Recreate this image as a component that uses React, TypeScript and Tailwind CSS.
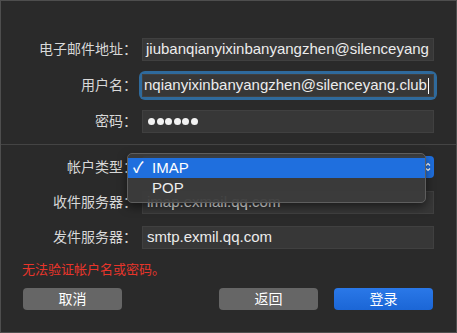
const labelCls = "w-[136px] shrink-0 text-right text-[14px] text-[#d8d8d8]";
const fieldCls = "w-[292px] h-[23px] bg-[#373737] border border-[#404040] flex items-center overflow-hidden whitespace-nowrap text-[15px] text-[#ececec]";

const Row = ({ label, children, className = "" }: { label: string; children: React.ReactNode; className?: string }) => (
  <div className={`flex items-center ${className}`}>
    <div className={labelCls}>{label}</div>
    <div className="ml-[5px]">{children}</div>
  </div>
);

export default function App() {
  return (
    <div
      className="w-[457px] h-[333px] bg-[#2a2a2a] border border-[#4e4e4e] overflow-hidden relative"
      style={{ fontFamily: '"Liberation Sans", "Noto Sans CJK SC", sans-serif' }}
    >
      <div className="pt-[37px]">
        <Row label="电子邮件地址：">
          <div className={`${fieldCls} px-[3px]`}>jiubanqianyixinbanyangzhen@silenceyang</div>
        </Row>

        <Row label="用户名：" className="mt-[13px]">
          <div className="rounded-[3px] ring-[3px] ring-[#2f6a9c]">
            <div className={`${fieldCls} h-[21px] pl-[1px]`}>
              <span>nqianyixinbanyangzhen@silenceyang.club</span>
              <span className="w-px h-[16px] bg-white ml-px shrink-0" />
            </div>
          </div>
        </Row>

        <Row label="密码：" className="mt-[13px]">
          <div className={`${fieldCls} px-[5px] gap-[1.5px]`}>
            {[0, 1, 2, 3, 4, 5].map((i) => (
              <span key={i} className="w-[7px] h-[7px] rounded-full bg-[#f2f2f2]" />
            ))}
          </div>
        </Row>

        <div className="mt-[11px] h-px bg-[#444444]" />

        <div className="relative mt-[11px]">
          <Row label="帐户类型：">
            <div className="w-[292px] h-[22px] rounded-[4px] bg-[#1f6fde] flex items-center justify-between pl-[8px] pr-[3px] text-[14px] text-white">
              <span>IMAP</span>
              <svg width="6" height="12" viewBox="0 0 6 12" fill="none" stroke="white" strokeWidth="1.2">
                <path d="M1 4.5 L3 2.5 L5 4.5" />
                <path d="M1 7.5 L3 9.5 L5 7.5" />
              </svg>
            </div>
          </Row>

          {/* popup menu */}
          <div className="absolute left-[126px] top-[-3px] w-[299px] h-[50px] rounded-[5px] border border-[#5e5e5e] bg-[#3b3b3b]/95 shadow-[0_4px_10px_rgba(0,0,0,0.5)] pt-[4px] z-10 text-[15px] text-white font-medium">
            <div className="h-[20px] bg-[#1f6fde] flex items-center">
              <span className="w-[24px] pl-[5px] text-[15px]">✓</span>
              <span>IMAP</span>
            </div>
            <div className="h-[20px] flex items-center">
              <span className="w-[24px]" />
              <span className="text-[#eeeeee]">POP</span>
            </div>
          </div>
        </div>

        <Row label="收件服务器：" className="mt-[13px]">
          <div className={`${fieldCls} px-[4px]`}>imap.exmail.qq.com</div>
        </Row>

        <Row label="发件服务器：" className="mt-[12px]">
          <div className={`${fieldCls} px-[4px]`}>smtp.exmil.qq.com</div>
        </Row>

        <div className="mt-[12px] pl-[21px] text-[13px] leading-[18px] text-[#e8352a]">无法验证帐户名或密码。</div>

        <div className="mt-[9px] flex pl-[22px] pr-[23px] text-[14px] text-white">
          <button className="w-[99px] h-[22px] rounded-[4px] bg-[#666666] flex items-center justify-center">取消</button>
          <div className="flex-1" />
          <button className="w-[99px] h-[22px] rounded-[4px] bg-[#666666] flex items-center justify-center">返回</button>
          <button className="ml-[16px] w-[99px] h-[22px] rounded-[4px] bg-gradient-to-b from-[#2a78e8] to-[#1b66d6] flex items-center justify-center">登录</button>
        </div>
      </div>
    </div>
  );
}
